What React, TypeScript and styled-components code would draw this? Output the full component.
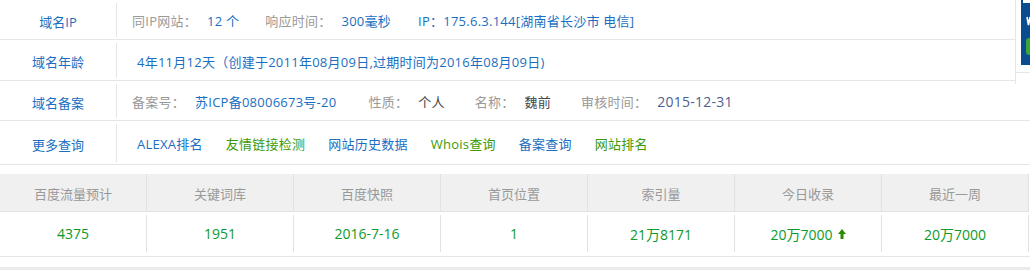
import React, { FunctionComponent } from 'react';
import styled, { createGlobalStyle } from 'styled-components';

const GlobalStyle = createGlobalStyle`
  html, body {
    margin: 0;
    padding: 0;
    background: #fff;
  }
  body {
    font-family: "Open Sans", "Noto Sans CJK SC", sans-serif;
    font-size: 13px;
    color: #333;
  }
`;

const BLUE = '#1a6fc2';
const GREEN = '#3c9a06';
const NUM_GREEN = '#0e9a2c';
const LINE = '#e6e6e6';

const Page = styled.div`
  position: relative;
  width: 1030px;
`;

const InfoTable = styled.div`
  display: flex;
  flex-direction: column;
`;

const InfoRow = styled.div<{ $h: number }>`
  display: flex;
  align-items: stretch;
  height: ${(p) => p.$h}px;
  border-bottom: 1px solid ${LINE};
`;

const RowLabel = styled.div`
  width: 116px;
  flex: none;
  margin: 3px 0 2px;
  border-right: 1px solid ${LINE};
  display: flex;
  align-items: center;
  justify-content: center;
  color: ${BLUE};
  padding-top: 2px;
`;

const RowBody = styled.div<{ $pad: number }>`
  display: flex;
  align-items: center;
  padding-left: ${(p) => p.$pad}px;
  padding-top: 2px;
  white-space: nowrap;
  letter-spacing: 0.25px;
`;

const Field = styled.span<{ $gap?: number }>`
  display: inline-flex;
  align-items: baseline;
  margin-right: ${(p) => p.$gap ?? 30}px;
`;

const Key = styled.span`
  color: #999;
  margin-right: 10px;
`;

const Value = styled.span<{ $tone?: 'blue' | 'dark' | 'slate' }>`
  color: ${(p) => (p.$tone === 'dark' ? '#444' : p.$tone === 'slate' ? '#4c5f8e' : BLUE)};
  font-size: ${(p) => (p.$tone === 'slate' ? '14px' : '13px')};
`;

const Plain = styled.span`
  color: ${BLUE};
`;

const QueryLink = styled.a<{ $green?: boolean }>`
  color: ${(p) => (p.$green ? GREEN : BLUE)};
  text-decoration: none;
  margin-right: 23px;
`;

const AdFloat = styled.div`
  position: absolute;
  top: 0;
  right: 0;
  width: 14px;
  height: 84px;
  background: #fff;
  border-left: 1px solid ${LINE};
`;

const AdTop = styled.div`
  height: 72px;
  border-bottom: 1px solid ${LINE};
  padding-left: 5px;
`;

const AdImage = styled.div`
  height: 65px;
  background: #0b4b8e;
  overflow: hidden;
`;

const StatsTable = styled.div`
  margin-top: 9px;
  display: grid;
  grid-template-columns: repeat(7, 147px);
  border-bottom: 1px solid ${LINE};
`;

const HeadCell = styled.div`
  height: 38px;
  box-sizing: border-box;
  background: #f0f0f0;
  border-right: 1px solid #e2e2e2;
  border-bottom: 1px solid #e2e2e2;
  display: flex;
  align-items: center;
  justify-content: center;
  color: #999;
  padding-top: 1px;
`;

const DataCell = styled.div`
  height: 44px;
  display: flex;
  align-items: center;
  justify-content: center;
`;

const DataInner = styled.div`
  align-self: stretch;
  flex: 1;
  margin: 3px 0 4px;
  border-right: 1px solid #e2e2e2;
  display: flex;
  align-items: center;
  justify-content: center;
  color: ${NUM_GREEN};
  font-size: 14px;
  gap: 5px;
`;

const BottomBar = styled.div`
  margin-top: 10px;
  height: 10px;
  background: #ebebeb;
`;

const UpArrow: FunctionComponent = () => (
  <svg width="8" height="10" viewBox="0 0 8 10">
    <path d="M4 0 L8 5 L5.5 5 L5.5 10 L2.5 10 L2.5 5 L0 5 Z" fill="#2c8a00" />
  </svg>
);

const AdArt: FunctionComponent = () => (
  <svg width="9" height="65" viewBox="0 0 9 65">
    <rect x="2" y="0" width="7" height="3" fill="#fff" />
    <path d="M6 17 L7.5 25 L9 17" stroke="#fff" strokeWidth="1.6" fill="none" />
    <rect x="5" y="38" width="8" height="17" rx="3" fill="#3aa53a" />
  </svg>
);

const headers = ['百度流量预计', '关键词库', '百度快照', '首页位置', '索引量', '今日收录', '最近一周'];
const values = ['4375', '1951', '2016-7-16', '1', '21万8171', '20万7000', '20万7000'];

const links = [
  { text: 'ALEXA排名', green: false },
  { text: '友情链接检测', green: true },
  { text: '网站历史数据', green: false },
  { text: 'Whois查询', green: true },
  { text: '备案查询', green: false },
  { text: '网站排名', green: true },
];

const App: FunctionComponent = () => {
  return (
    <Page>
      <GlobalStyle />
      <InfoTable>
        <InfoRow $h={39}>
          <RowLabel>域名IP</RowLabel>
          <RowBody $pad={15}>
            <Field $gap={26}>
              <Key>同IP网站：</Key>
              <Value>12 个</Value>
            </Field>
            <Field $gap={27}>
              <Key>响应时间：</Key>
              <Value>300毫秒</Value>
            </Field>
            <Plain>IP：175.6.3.144[湖南省长沙市 电信]</Plain>
          </RowBody>
        </InfoRow>
        <InfoRow $h={40}>
          <RowLabel>域名年龄</RowLabel>
          <RowBody $pad={20}>
            <Plain>4年11月12天（创建于2011年08月09日,过期时间为2016年08月09日)</Plain>
          </RowBody>
        </InfoRow>
        <InfoRow $h={39}>
          <RowLabel>域名备案</RowLabel>
          <RowBody $pad={15}>
            <Field $gap={32}>
              <Key>备案号：</Key>
              <Value>苏ICP备08006673号-20</Value>
            </Field>
            <Field>
              <Key>性质：</Key>
              <Value $tone="dark">个人</Value>
            </Field>
            <Field>
              <Key>名称：</Key>
              <Value $tone="dark">魏前</Value>
            </Field>
            <Field>
              <Key>审核时间：</Key>
              <Value $tone="slate">2015-12-31</Value>
            </Field>
          </RowBody>
        </InfoRow>
        <InfoRow $h={43}>
          <RowLabel>更多查询</RowLabel>
          <RowBody $pad={20}>
            {links.map((l) => (
              <QueryLink key={l.text} href="#" $green={l.green}>
                {l.text}
              </QueryLink>
            ))}
          </RowBody>
        </InfoRow>
      </InfoTable>

      <AdFloat>
        <AdTop>
          <AdImage>
            <AdArt />
          </AdImage>
        </AdTop>
      </AdFloat>

      <StatsTable>
        {headers.map((h) => (
          <HeadCell key={h}>{h}</HeadCell>
        ))}
        {values.map((v, i) => (
          <DataCell key={i}>
            <DataInner>
              {v}
              {i === 5 && <UpArrow />}
            </DataInner>
          </DataCell>
        ))}
      </StatsTable>
      <BottomBar />
    </Page>
  );
};

export default App;
